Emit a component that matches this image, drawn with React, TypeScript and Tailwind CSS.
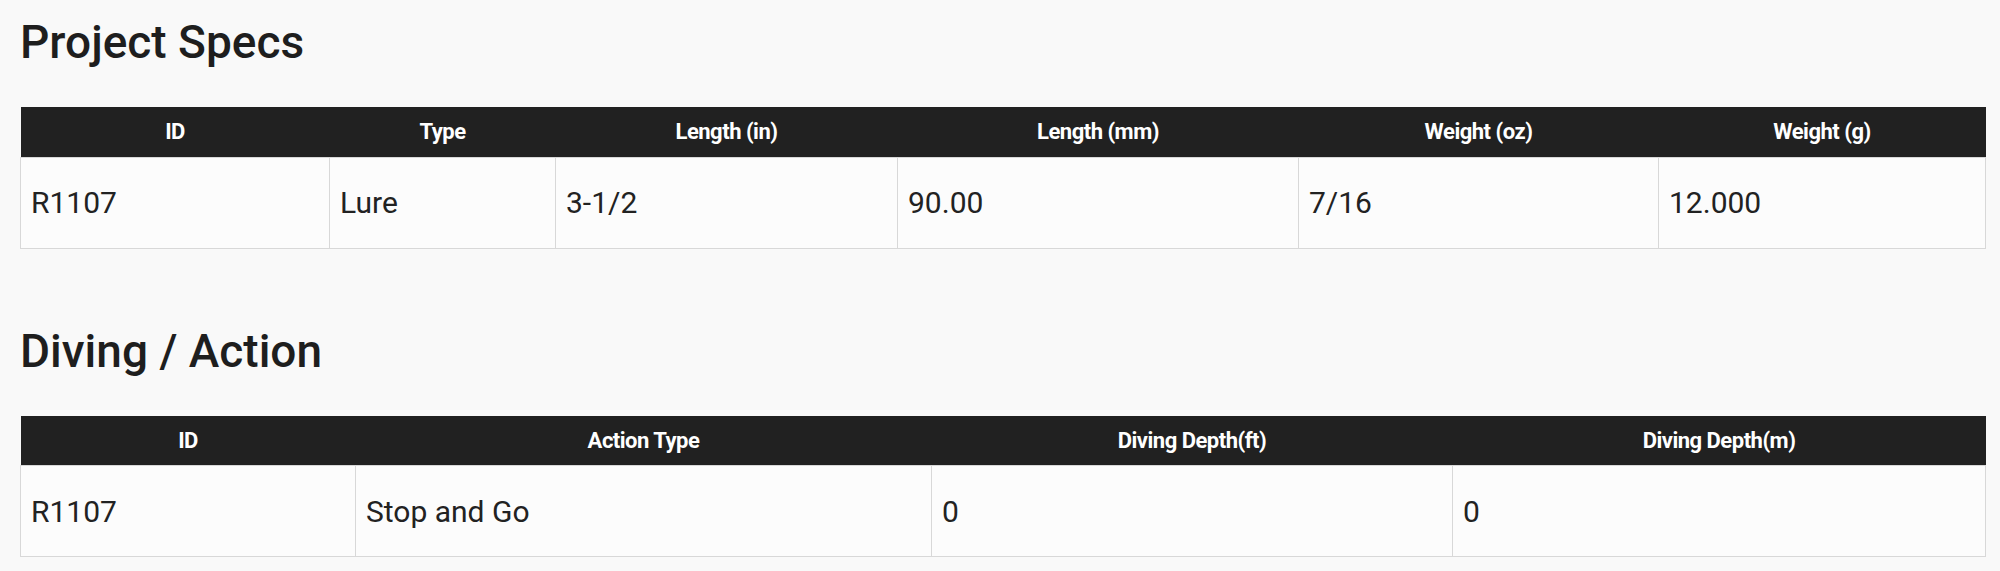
const specCols = [309, 226, 342, 401, 360, 327];
const specHead = ["ID", "Type", "Length (in)", "Length (mm)", "Weight (oz)", "Weight (g)"];
const specRow = ["R1107", "Lure", "3-1/2", "90.00", "7/16", "12.000"];

const divingCols = [335, 576, 521, 533];
const divingHead = ["ID", "Action Type", "Diving Depth(ft)", "Diving Depth(m)"];
const divingRow = ["R1107", "Stop and Go", "0", "0"];

function SpecTable({
  cols,
  head,
  row,
}: {
  cols: number[];
  head: string[];
  row: string[];
}) {
  return (
    <table className="w-full table-fixed border-collapse">
      <colgroup>
        {cols.map((w, i) => (
          <col key={i} style={{ width: w }} />
        ))}
      </colgroup>
      <thead>
        <tr className="bg-[#212121] h-[50px]">
          {head.map((h) => (
            <th
              key={h}
              className="text-center text-white text-[22px] font-bold tracking-[-0.5px] p-0"
            >
              {h}
            </th>
          ))}
        </tr>
      </thead>
      <tbody>
        <tr className="h-[91px] bg-[#fcfcfc]">
          {row.map((c, i) => (
            <td
              key={i}
              className="border border-[#d8d8d8] px-[10px] text-left text-[30px] text-[#222] font-normal"
            >
              {c}
            </td>
          ))}
        </tr>
      </tbody>
    </table>
  );
}

export default function App() {
  return (
    <div className="min-h-[571px] bg-[#f9f9f9] pl-[20px] pr-[15px] font-['Roboto',sans-serif] text-[#222]">
      <h2 className="pt-[15px] text-[46px] leading-[54px] font-medium text-[#1e1e1e]">
        Project Specs
      </h2>
      <div className="mt-[38px]">
        <SpecTable cols={specCols} head={specHead} row={specRow} />
      </div>

      <h2 className="mt-[75px] text-[46px] leading-[54px] font-medium text-[#1e1e1e]">
        Diving / Action
      </h2>
      <div className="mt-[38px]">
        <SpecTable cols={divingCols} head={divingHead} row={divingRow} />
      </div>
    </div>
  );
}
